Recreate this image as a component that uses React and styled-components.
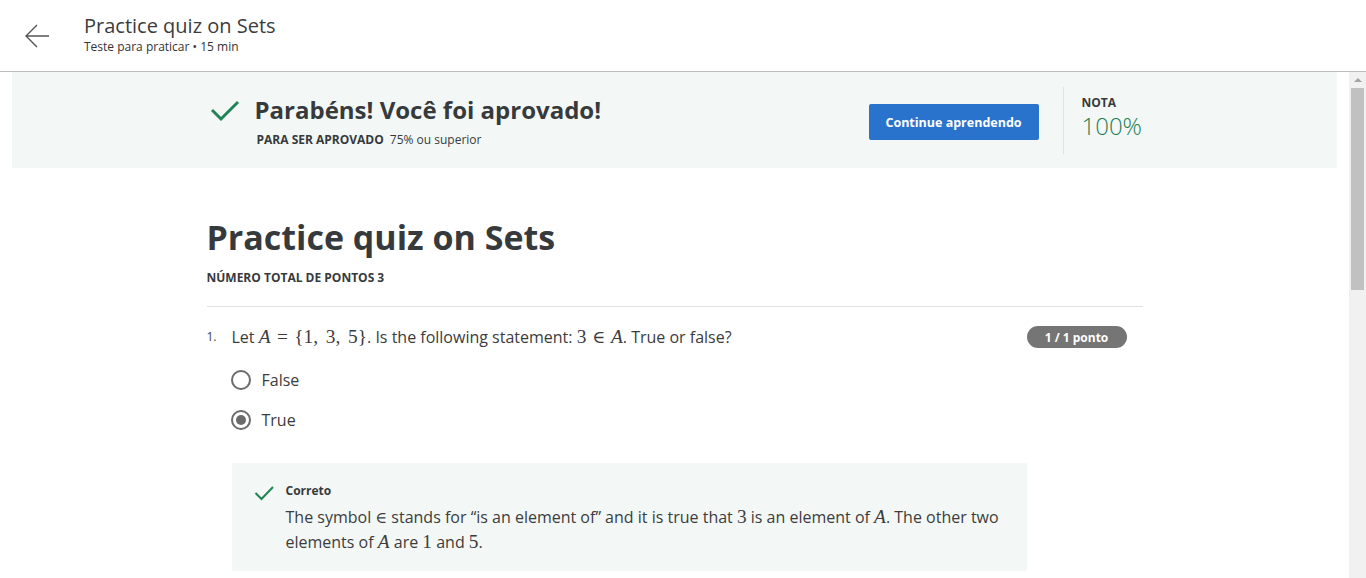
import React from "react";
import styled, { createGlobalStyle } from "styled-components";

const Global = createGlobalStyle`
  html, body { margin: 0; padding: 0; height: 100%; overflow: hidden; }
  body { font-family: "Open Sans", "Noto Sans", sans-serif; color: #1f1f1f; background: #fff; }
  #root { height: 100%; }
  * { box-sizing: border-box; }
`;

const Page = styled.div`
  display: flex;
  flex-direction: column;
  height: 100vh;
`;

const Header = styled.header`
  height: 72px;
  flex: none;
  display: flex;
  align-items: flex-start;
  border-bottom: 1px solid #bdbdbd;
  padding: 12px 0 0 24px;
`;

const BackButton = styled.button`
  border: 0;
  background: transparent;
  padding: 0;
  margin: 11px 34px 0 0;
  width: 26px;
  height: 26px;
  display: flex;
  align-items: center;
  justify-content: center;
  cursor: pointer;
`;

const HeaderText = styled.div`
  display: flex;
  flex-direction: column;
`;

const HeaderTitle = styled.div`
  font-size: 20px;
  line-height: 28px;
  color: #3c3c3c;
`;

const HeaderSub = styled.div`
  font-size: 12px;
  line-height: 16px;
  color: #333;
  margin-top: -1px;
`;

const Body = styled.div`
  flex: 1;
  display: flex;
  min-height: 0;
`;

const Main = styled.main`
  flex: 1;
  overflow: hidden;
`;

const ScrollTrack = styled.div`
  width: 17px;
  flex: none;
  background: #f1f1f1;
  display: flex;
  flex-direction: column;
  align-items: center;
`;

const ScrollArrow = styled.div`
  height: 16px;
  width: 100%;
  display: flex;
  align-items: center;
  justify-content: center;
  &::before {
    content: "";
    border-left: 4px solid transparent;
    border-right: 4px solid transparent;
    border-bottom: 4px solid #a3a3a3;
  }
`;

const ScrollThumb = styled.div`
  width: 13px;
  height: 202px;
  background: #c1c1c1;
`;

const Banner = styled.section`
  margin: 0 12px;
  height: 96px;
  background: #f3f8f7;
  display: flex;
  justify-content: center;
`;

const BannerInner = styled.div`
  width: 936px;
  display: flex;
  align-items: center;
  padding-left: 4px;
`;

const BannerLeft = styled.div`
  flex: 1;
  display: flex;
  align-items: flex-start;
  margin-top: 1px;
`;

const CheckWrap = styled.div`
  width: ${(p) => p.$w || 28}px;
  margin: ${(p) => p.$mt || 0}px ${(p) => p.$mr || 16}px 0 0;
  flex: none;
  display: flex;
`;

const BannerTitle = styled.h2`
  margin: 0;
  font-size: 24px;
  line-height: 32px;
  font-weight: 700;
  color: #373a3c;
`;

const PassLine = styled.div`
  margin-top: 6px;
  font-size: 12px;
  line-height: 16px;
  color: #373a3c;
  display: flex;
  gap: 6px;
  padding-left: 2px;
`;

const Strong = styled.span`
  font-weight: 700;
`;

const PrimaryButton = styled.button`
  width: 170px;
  height: 36px;
  border: 0;
  border-radius: 2px;
  background: #2a73cc;
  color: #fff;
  font-family: "Open Sans", sans-serif;
  font-weight: 700;
  font-size: 12.5px;
  margin-top: 4px;
  cursor: pointer;
`;

const VDivider = styled.div`
  width: 1px;
  height: 67px;
  background: #dfe3e2;
  margin: 0 18px 0 24px;
`;

const Grade = styled.div`
  width: 61px;
  display: flex;
  flex-direction: column;
  margin-top: -4px;
`;

const GradeLabel = styled.div`
  font-size: 12px;
  line-height: 16px;
  font-weight: 700;
  color: #373a3c;
`;

const GradeValue = styled.div`
  font-size: 24px;
  line-height: 30px;
  font-weight: 300;
  color: #1f7f55;
`;

const Content = styled.div`
  width: 936px;
  margin: 0 auto;
  padding-top: 47px;
`;

const QuizTitle = styled.h1`
  margin: 0;
  font-size: 34px;
  line-height: 44px;
  font-weight: 700;
  color: #373a3c;
`;

const PointsTotal = styled.div`
  margin-top: 11px;
  font-size: 12px;
  line-height: 16px;
  font-weight: 700;
  color: #373a3c;
  text-transform: uppercase;
`;

const HRule = styled.hr`
  margin: 20px 0 0;
  border: 0;
  border-top: 1px solid #e1e1e1;
`;

const Question = styled.div`
  display: flex;
  margin-top: 18px;
  padding-right: 16px;
`;

const QNumber = styled.div`
  width: 25px;
  flex: none;
  font-size: 12px;
  line-height: 24px;
  color: #444;
`;

const QBody = styled.div`
  flex: 1;
`;

const Prompt = styled.div`
  font-size: 16px;
  line-height: 24px;
  color: #3c3c3c;
`;

const Badge = styled.div`
  flex: none;
  width: 100px;
  height: 22px;
  margin-top: 1px;
  border-radius: 11px;
  background: #757575;
  color: #fff;
  font-size: 12px;
  font-weight: 700;
  display: flex;
  align-items: center;
  justify-content: center;
`;

const Options = styled.div`
  margin-top: 11px;
  display: flex;
  flex-direction: column;
`;

const Option = styled.label`
  display: flex;
  align-items: center;
  padding: 8px 0;
  font-size: 16px;
  line-height: 24px;
  color: #3c3c3c;
  margin-left: -1px;
`;

const Radio = styled.span`
  width: 20px;
  height: 20px;
  border-radius: 50%;
  border: 2px solid #6b6b6b;
  display: flex;
  align-items: center;
  justify-content: center;
  margin-right: 11px;
  flex: none;
  &::after {
    content: "";
    width: 10px;
    height: 10px;
    border-radius: 50%;
    background: ${(p) => (p.$checked ? "#6b6b6b" : "transparent")};
  }
`;

const Feedback = styled.div`
  margin-top: 23px;
  background: #f3f8f7;
  padding: 20px 20px 16px 22px;
  display: flex;
`;

const FeedbackText = styled.div`
  flex: 1;
`;

const FeedbackLabel = styled.div`
  font-size: 12px;
  line-height: 16px;
  font-weight: 700;
  color: #373a3c;
`;

const FeedbackBody = styled.div`
  margin-top: 6px;
  font-size: 16px;
  line-height: 25px;
  color: #3c3c3c;
`;

const M = styled.span`
  font-family: "Liberation Serif", "DejaVu Serif", serif;
  font-size: ${(p) => p.$fs || 1.21}em;
  line-height: 1;
  font-style: ${(p) => (p.$i ? "italic" : "normal")};
  margin: 0 ${(p) => p.$mx || 0}em;
`;

const Check = () => (
  <svg width="28" height="22" viewBox="0 0 28 22" fill="none">
    <polyline points="2,11 10,19 26,3" stroke="#1f8354" strokeWidth="3" strokeLinecap="square" />
  </svg>
);

export default function App() {
  return (
    <>
      <Global />
      <Page>
        <Header>
          <BackButton aria-label="Voltar">
            <svg width="26" height="24" viewBox="0 0 26 24" fill="none">
              <path d="M25 12H2M13 1L2 12l11 11" stroke="#555" strokeWidth="1.4" />
            </svg>
          </BackButton>
          <HeaderText>
            <HeaderTitle>Practice quiz on Sets</HeaderTitle>
            <HeaderSub>Teste para praticar • 15 min</HeaderSub>
          </HeaderText>
        </Header>
        <Body>
          <Main>
            <Banner>
              <BannerInner>
                <BannerLeft>
                  <CheckWrap $mt={6} $mr={16}>
                    <Check />
                  </CheckWrap>
                  <div>
                    <BannerTitle>Parabéns! Você foi aprovado!</BannerTitle>
                    <PassLine>
                      <Strong>PARA SER APROVADO</Strong>
                      <span>75% ou superior</span>
                    </PassLine>
                  </div>
                </BannerLeft>
                <PrimaryButton>Continue aprendendo</PrimaryButton>
                <VDivider />
                <Grade>
                  <GradeLabel>NOTA</GradeLabel>
                  <GradeValue>100%</GradeValue>
                </Grade>
              </BannerInner>
            </Banner>
            <Content>
              <QuizTitle>Practice quiz on Sets</QuizTitle>
              <PointsTotal>Número total de pontos 3</PointsTotal>
              <HRule />
              <Question>
                <QNumber>1.</QNumber>
                <QBody>
                  <Prompt>
                    Let <M $i>A</M>
                    <M $mx={0.33}>=</M>
                    <M>{"{1,\u2009\u20093,\u2009\u20095}"}</M>. Is the following statement: <M>3</M>
                    <M $mx={0.33} $fs={1.1}>∈</M>
                    <M $i>A</M>. True or false?
                  </Prompt>
                  <Options>
                    <Option>
                      <Radio />
                      False
                    </Option>
                    <Option>
                      <Radio $checked />
                      True
                    </Option>
                  </Options>
                  <Feedback>
                    <CheckWrap $w={20} $mt={2} $mr={12}>
                      <svg width="20" height="16" viewBox="0 0 20 16" fill="none">
                        <polyline points="1.5,8 7.5,14 19,2" stroke="#1f8354" strokeWidth="2" />
                      </svg>
                    </CheckWrap>
                    <FeedbackText>
                      <FeedbackLabel>Correto</FeedbackLabel>
                      <FeedbackBody>
                        The symbol <M $fs={1}>∈</M> stands for “is an element of” and it is true that <M>3</M> is an
                        element of <M $i>A</M>. The other two elements of <M $i>A</M> are <M>1</M> and <M>5</M>.
                      </FeedbackBody>
                    </FeedbackText>
                  </Feedback>
                </QBody>
                <Badge>1 / 1 ponto</Badge>
              </Question>
            </Content>
          </Main>
          <ScrollTrack>
            <ScrollArrow />
            <ScrollThumb />
          </ScrollTrack>
        </Body>
      </Page>
    </>
  );
}
